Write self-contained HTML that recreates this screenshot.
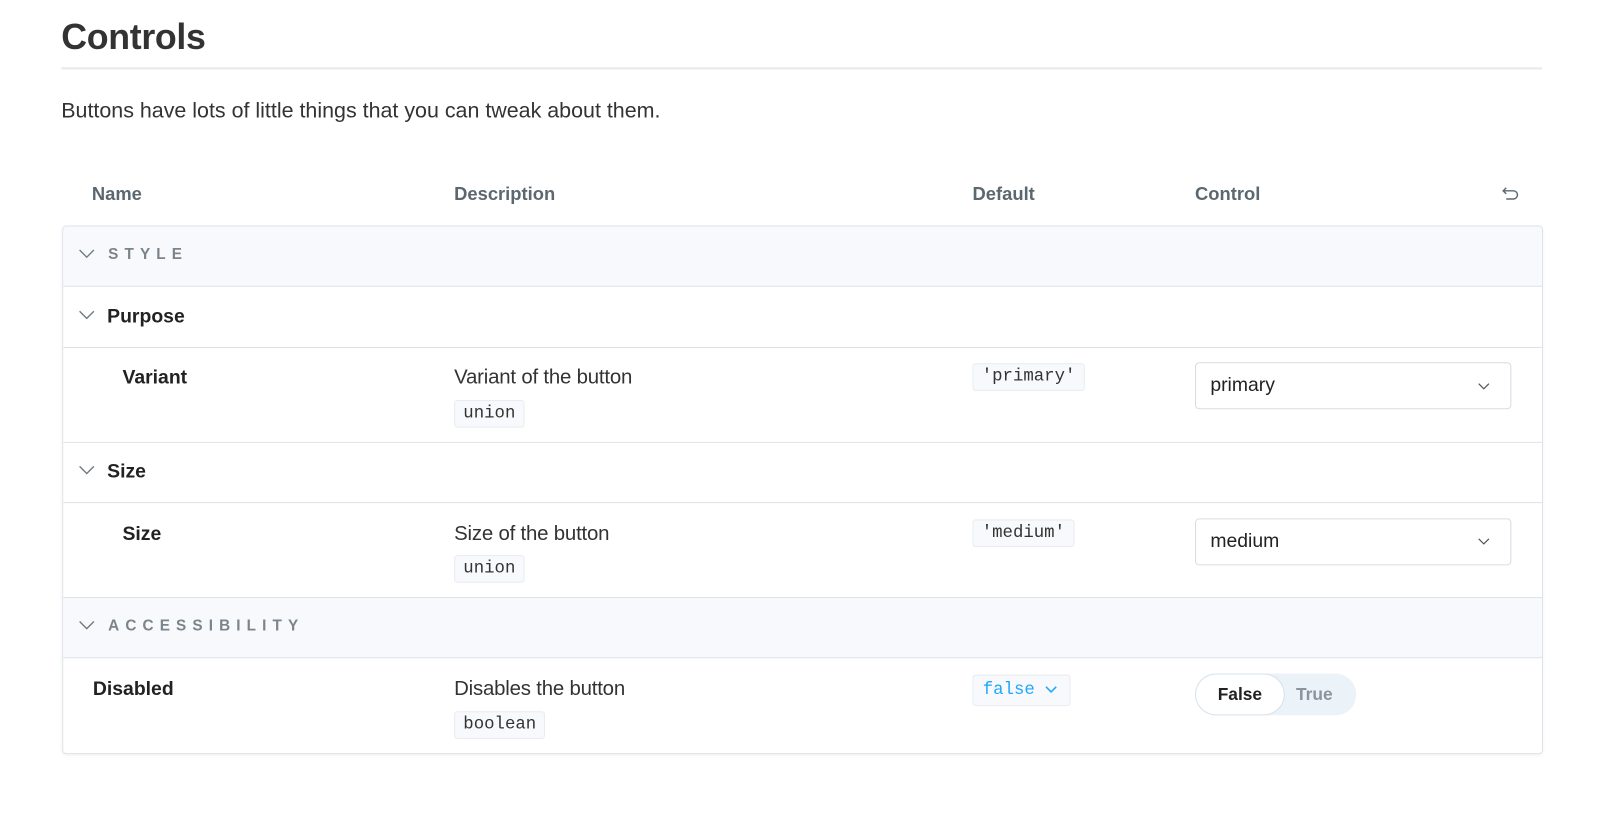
<!DOCTYPE html>
<html><head><meta charset="utf-8"><style>
*{box-sizing:border-box;margin:0;padding:0}
body{width:1600px;height:828px;background:#fff;font-family:"Liberation Sans",sans-serif;color:#2e3438;position:relative;overflow:hidden}
#w{position:absolute;left:0;top:0;width:1568px;height:812px;transform:scale(1.0205);transform-origin:0 0}
.a{position:absolute;white-space:nowrap}
h1{position:absolute;left:60px;top:17px;font-size:35px;font-weight:700;color:#333;letter-spacing:-0.3px}
.rule{position:absolute;left:60px;top:66px;width:1451px;height:2px;background:#e6e9ec}
.p{left:60px;top:97px;font-size:21px;color:#333}
.th{top:180px;font-size:18px;font-weight:700;color:#5c6870}
.box{position:absolute;left:61px;top:221px;width:1451px;height:518px;border:1px solid #dde3ea;border-radius:4px;box-shadow:0 1px 3px rgba(0,0,0,.06);overflow:hidden}
.row{position:absolute;left:0;width:100%;border-bottom:1px solid #dde3ea}
.sec{background:#f7f9fc}
.cap{font-size:15px;font-weight:700;letter-spacing:6px;color:#7b848c}
.b{font-size:19px;font-weight:700;color:#222}
.d{font-size:20px;color:#333;letter-spacing:-0.2px}
.code{font-family:"Liberation Mono",monospace;font-size:17px;color:#333;background:#f7f9fc;border:1px solid #e8ecf0;border-radius:3px;padding:2px 8px;height:27px;line-height:22px}
.sel{position:absolute;width:310px;height:46px;border:1px solid #d6dde3;border-radius:4px;font-size:19px;color:#222;padding:11px 14px}
</style></head><body><div id="w">
<h1>Controls</h1>
<div class="rule"></div>
<div class="a p">Buttons have lots of little things that you can tweak about them.</div>
<div class="a th" style="left:90px">Name</div>
<div class="a th" style="left:445px">Description</div>
<div class="a th" style="left:953px">Default</div>
<div class="a th" style="left:1171px">Control</div>
<svg class="a" style="left:1471px;top:182px" width="18" height="16" viewBox="0 0 18 16"><path d="M5 2 L2 5 L5 8 M2 5 H12 A4 4 0 0 1 12 13 H5" fill="none" stroke="#5c6870" stroke-width="1.4"/></svg>

<div class="box">
 <div class="row sec" style="top:0;height:59px"></div>
 <div class="row" style="top:59px;height:60px"></div>
 <div class="row" style="top:119px;height:93px"></div>
 <div class="row" style="top:212px;height:59px"></div>
 <div class="row" style="top:271px;height:93px"></div>
 <div class="row sec" style="top:364px;height:59px"></div>
</div>

<svg class="a" style="left:77px;top:244px" width="16" height="10"><path d="M1 1 L8 8 L15 1" fill="none" stroke="#6f7880" stroke-width="1.3"/></svg>
<div class="a cap" style="left:106px;top:241px">STYLE</div>
<svg class="a" style="left:77px;top:304px" width="16" height="10"><path d="M1 1 L8 8 L15 1" fill="none" stroke="#6f7880" stroke-width="1.3"/></svg>
<div class="a b" style="left:105px;top:300px">Purpose</div>

<div class="a b" style="left:120px;top:360px">Variant</div>
<div class="a d" style="left:445px;top:359px">Variant of the button</div>
<div class="a code" style="left:445px;top:392px">union</div>
<div class="a code" style="left:953px;top:356px">'primary'</div>
<div class="sel" style="left:1171px;top:355px">primary</div>
<svg class="a" style="left:1448px;top:375px" width="12" height="8"><path d="M1 1 L6 6 L11 1" fill="none" stroke="#555" stroke-width="1.2"/></svg>

<svg class="a" style="left:77px;top:456px" width="16" height="10"><path d="M1 1 L8 8 L15 1" fill="none" stroke="#6f7880" stroke-width="1.3"/></svg>
<div class="a b" style="left:105px;top:452px">Size</div>

<div class="a b" style="left:120px;top:513px">Size</div>
<div class="a d" style="left:445px;top:512px">Size of the button</div>
<div class="a code" style="left:445px;top:544px">union</div>
<div class="a code" style="left:953px;top:509px">'medium'</div>
<div class="sel" style="left:1171px;top:508px">medium</div>
<svg class="a" style="left:1448px;top:527px" width="12" height="8"><path d="M1 1 L6 6 L11 1" fill="none" stroke="#555" stroke-width="1.2"/></svg>

<svg class="a" style="left:77px;top:608px" width="16" height="10"><path d="M1 1 L8 8 L15 1" fill="none" stroke="#6f7880" stroke-width="1.3"/></svg>
<div class="a cap" style="left:106px;top:605px">ACCESSIBILITY</div>

<div class="a b" style="left:91px;top:665px">Disabled</div>
<div class="a d" style="left:445px;top:664px">Disables the button</div>
<div class="a code" style="left:445px;top:697px">boolean</div>
<div class="a code" style="left:953px;top:661px;color:#1ea7fd;height:31px;padding:4px 9px;width:96px">false</div>
<svg class="a" style="left:1024px;top:672px" width="12" height="8"><path d="M1 1 L6 6 L11 1" fill="none" stroke="#1ea7fd" stroke-width="1.5"/></svg>
<div class="a" style="left:1171px;top:660px;width:158px;height:41px;border-radius:21px;background:#ebf2f8"></div>
<div class="a" style="left:1172px;top:661px;width:86px;height:39px;border-radius:20px;background:#fff;box-shadow:0 0 0 1px #d6e2ec;font-size:17px;font-weight:700;color:#222;text-align:center;line-height:39px">False</div>
<div class="a" style="left:1270px;top:661px;font-size:17px;font-weight:700;color:#8c949b;line-height:39px">True</div>
</div></body></html>
